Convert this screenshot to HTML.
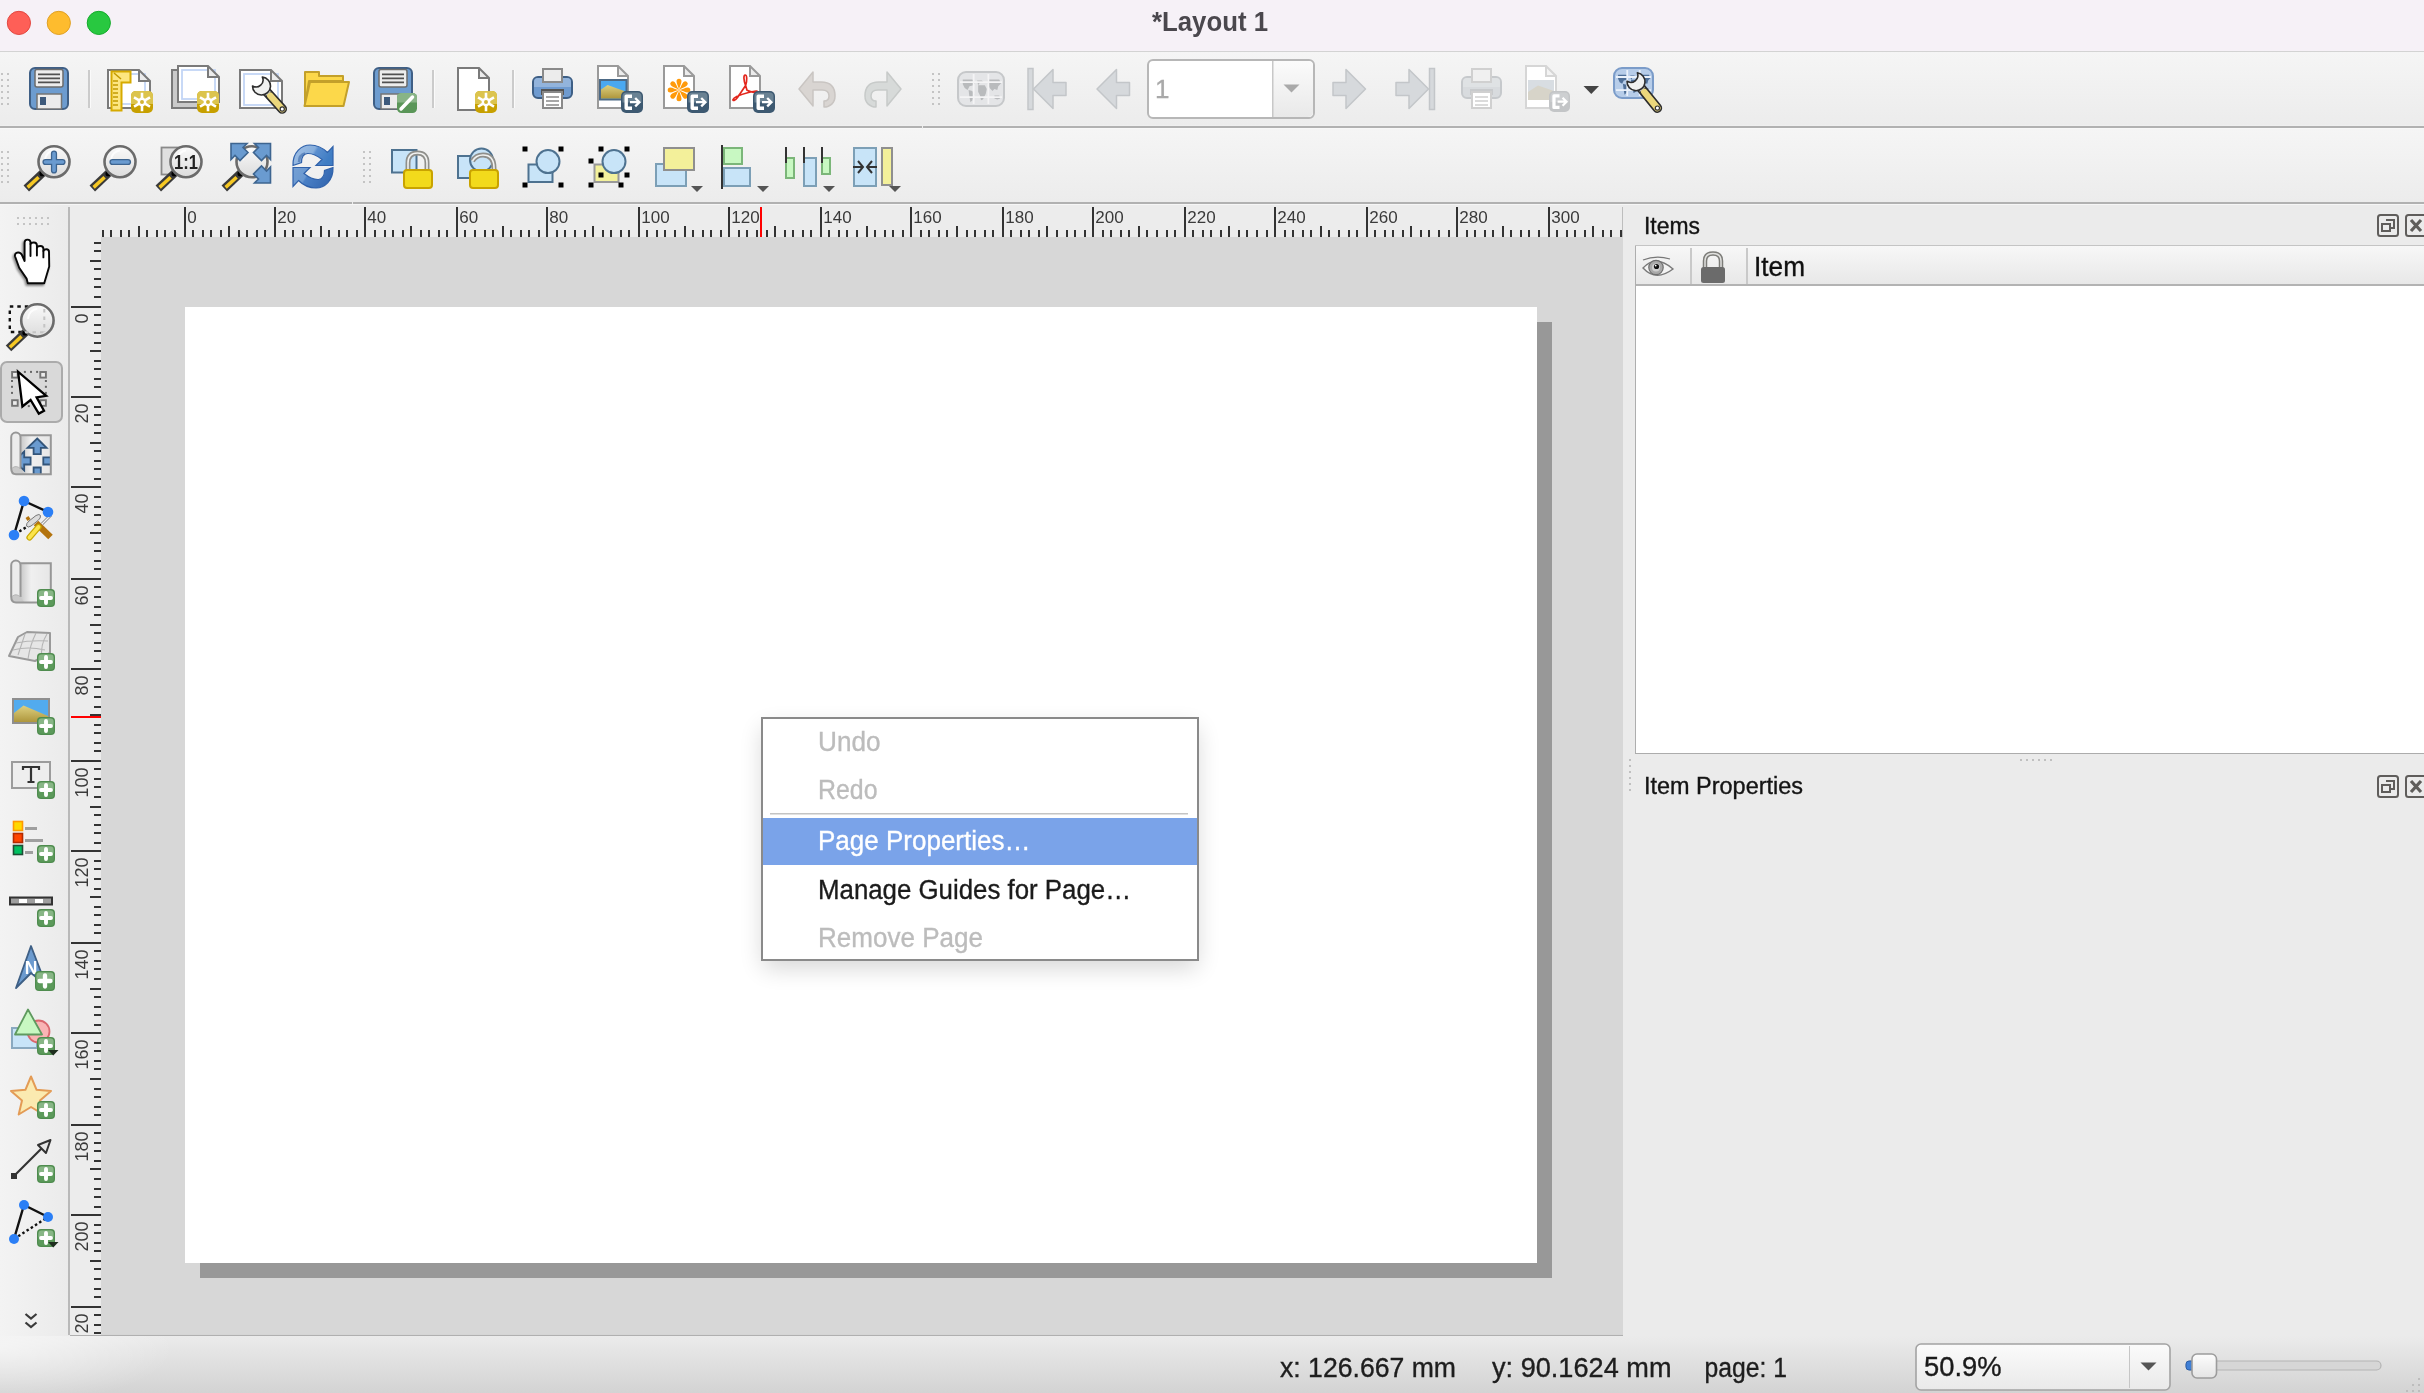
<!DOCTYPE html><html><head><meta charset="utf-8"><style>
html,body{margin:0;padding:0;width:2424px;height:1393px;overflow:hidden;background:#ececec;font-family:"Liberation Sans", sans-serif;}
.t{position:absolute;white-space:nowrap;line-height:1;}
</style></head><body>
<svg width="2424" height="1393" viewBox="0 0 2424 1393" style="position:absolute;left:0;top:0;will-change:transform">
<defs><linearGradient id="tb" x1="0" y1="0" x2="0" y2="1"><stop offset="0" stop-color="#f5f5f5"/><stop offset="1" stop-color="#ececec"/></linearGradient><linearGradient id="sb" x1="0" y1="0" x2="0" y2="1"><stop offset="0" stop-color="#ebebeb"/><stop offset="1" stop-color="#d3d3d3"/></linearGradient><linearGradient id="lt" x1="0" y1="0" x2="1" y2="0"><stop offset="0" stop-color="#f3f3f3"/><stop offset="1" stop-color="#ebebeb"/></linearGradient><linearGradient id="hdr" x1="0" y1="0" x2="0" y2="1"><stop offset="0" stop-color="#f7f7f7"/><stop offset="1" stop-color="#e8e8e8"/></linearGradient><linearGradient id="combo" x1="0" y1="0" x2="0" y2="1"><stop offset="0" stop-color="#fbfbfb"/><stop offset="1" stop-color="#e9e9e9"/></linearGradient><linearGradient id="glass" x1="0" y1="0" x2="0" y2="1"><stop offset="0" stop-color="#fafafa"/><stop offset="1" stop-color="#dcdcdc"/></linearGradient><linearGradient id="sky" x1="0" y1="0" x2="0" y2="1"><stop offset="0" stop-color="#4aa6ee"/><stop offset="0.45" stop-color="#5cb4f0"/><stop offset="0.46" stop-color="#dccf84"/><stop offset="1" stop-color="#ad943a"/></linearGradient><linearGradient id="sand" x1="0" y1="0" x2="0" y2="1"><stop offset="0" stop-color="#ddd080"/><stop offset="1" stop-color="#ae963c"/></linearGradient><linearGradient id="scroll" x1="0" y1="0" x2="1" y2="0"><stop offset="0" stop-color="#c8c8c8"/><stop offset="0.35" stop-color="#f0f0f0"/><stop offset="1" stop-color="#e6e6e6"/></linearGradient><linearGradient id="knob" x1="0" y1="0" x2="0" y2="1"><stop offset="0" stop-color="#fdfdfd"/><stop offset="1" stop-color="#e4e4e4"/></linearGradient><radialGradient id="sbl" cx="0" cy="0.2" r="1" gradientTransform="scale(0.25 1)"><stop offset="0" stop-color="#ffffff" stop-opacity="0.55"/><stop offset="1" stop-color="#ffffff" stop-opacity="0"/></radialGradient><clipPath id="rclip"><rect x="69" y="205" width="1553" height="1129"/></clipPath><linearGradient id="rf1" x1="0" y1="0" x2="1" y2="0.3"><stop offset="0" stop-color="#a3c1e6"/><stop offset="0.55" stop-color="#86aedc"/><stop offset="0.62" stop-color="#5b8fcf"/><stop offset="1" stop-color="#3f7dc4"/></linearGradient><linearGradient id="rf2" x1="0" y1="0" x2="1" y2="0.3"><stop offset="0" stop-color="#75a0d4"/><stop offset="0.4" stop-color="#6a98d0"/><stop offset="0.45" stop-color="#4a80c6"/><stop offset="1" stop-color="#3569b2"/></linearGradient></defs>
<rect x="0" y="0" width="2424" height="51" fill="#f6f1f7" />
<rect x="0" y="51" width="2424" height="1" fill="#d3d3d3" />
<rect x="0" y="52" width="2424" height="74" fill="url(#tb)" />
<rect x="0" y="125" width="2424" height="1" fill="#efefef" />
<rect x="0" y="126" width="2424" height="2" fill="#b1b1b1" />
<rect x="0" y="128" width="2424" height="1" fill="#f8f8f8" />
<rect x="0" y="129" width="2424" height="73" fill="url(#tb)" />
<rect x="0" y="202" width="2424" height="2" fill="#b1b1b1" />
<rect x="352" y="202" width="1" height="3" fill="#ededed" />
<rect x="922" y="126" width="1" height="3" fill="#ededed" />
<rect x="0" y="204" width="2424" height="1" fill="#f6f6f6" />
<rect x="0" y="205" width="2424" height="1131" fill="#ebebeb" />
<rect x="0" y="205" width="68" height="1131" fill="url(#lt)" />
<rect x="69" y="205" width="1554" height="32" fill="#ececec" />
<rect x="69" y="205" width="32" height="1130" fill="#ececec" />
<rect x="68" y="207" width="2" height="1128" fill="#b9b9b9" />
<rect x="101" y="237" width="1522" height="1097" fill="#d7d7d7" />
<rect x="101" y="1334" width="1522" height="1" fill="#d5d5d5" />
<rect x="70" y="1335" width="1553" height="1" fill="#b0b0b0" />
<rect x="1622" y="207" width="1" height="30" fill="#bdbdbd" />
<rect x="200" y="322" width="1352" height="956" fill="#989898" />
<rect x="185" y="307" width="1352" height="956" fill="#ffffff" />
<rect x="0" y="1336" width="2424" height="57" fill="url(#sb)" />
<rect x="0" y="1336" width="700" height="57" fill="url(#sbl)" />
<path d="M103 230V237M111 230V237M121 230V237M129 230V237M139 226V237M147 230V237M157 230V237M165 230V237M175 230V237M185 207V237M193 230V237M203 230V237M211 230V237M221 230V237M229 226V237M239 230V237M247 230V237M257 230V237M265 230V237M275 207V237M285 230V237M293 230V237M303 230V237M311 230V237M321 226V237M329 230V237M339 230V237M347 230V237M357 230V237M365 207V237M375 230V237M385 230V237M393 230V237M403 230V237M411 226V237M421 230V237M429 230V237M439 230V237M447 230V237M457 207V237M465 230V237M475 230V237M485 230V237M493 230V237M503 226V237M511 230V237M521 230V237M529 230V237M539 230V237M547 207V237M557 230V237M565 230V237M575 230V237M585 230V237M593 226V237M603 230V237M611 230V237M621 230V237M629 230V237M639 207V237M647 230V237M657 230V237M665 230V237M675 230V237M685 226V237M693 230V237M703 230V237M711 230V237M721 230V237M729 207V237M739 230V237M747 230V237M757 230V237M767 230V237M775 226V237M785 230V237M793 230V237M803 230V237M811 230V237M821 207V237M829 230V237M839 230V237M847 230V237M857 230V237M867 226V237M875 230V237M885 230V237M893 230V237M903 230V237M911 207V237M921 230V237M929 230V237M939 230V237M947 230V237M957 226V237M967 230V237M975 230V237M985 230V237M993 230V237M1003 207V237M1011 230V237M1021 230V237M1029 230V237M1039 230V237M1047 226V237M1057 230V237M1067 230V237M1075 230V237M1085 230V237M1093 207V237M1103 230V237M1111 230V237M1121 230V237M1129 230V237M1139 226V237M1147 230V237M1157 230V237M1167 230V237M1175 230V237M1185 207V237M1193 230V237M1203 230V237M1211 230V237M1221 230V237M1229 226V237M1239 230V237M1247 230V237M1257 230V237M1267 230V237M1275 207V237M1285 230V237M1293 230V237M1303 230V237M1311 230V237M1321 226V237M1329 230V237M1339 230V237M1349 230V237M1357 230V237M1367 207V237M1375 230V237M1385 230V237M1393 230V237M1403 230V237M1411 226V237M1421 230V237M1429 230V237M1439 230V237M1449 230V237M1457 207V237M1467 230V237M1475 230V237M1485 230V237M1493 230V237M1503 226V237M1511 230V237M1521 230V237M1529 230V237M1539 230V237M1549 207V237M1557 230V237M1567 230V237M1575 230V237M1585 230V237M1593 226V237M1603 230V237M1611 230V237M1621 230V237M94 243H101M94 251H101M90 261H101M94 269H101M94 279H101M94 287H101M94 297H101M71 307H101M94 315H101M94 325H101M94 333H101M94 343H101M90 351H101M94 361H101M94 369H101M94 379H101M94 387H101M71 397H101M94 407H101M94 415H101M94 425H101M94 433H101M90 443H101M94 451H101M94 461H101M94 469H101M94 479H101M71 487H101M94 497H101M94 507H101M94 515H101M94 525H101M90 533H101M94 543H101M94 551H101M94 561H101M94 569H101M71 579H101M94 587H101M94 597H101M94 607H101M94 615H101M90 625H101M94 633H101M94 643H101M94 651H101M94 661H101M71 669H101M94 679H101M94 687H101M94 697H101M94 707H101M90 715H101M94 725H101M94 733H101M94 743H101M94 751H101M71 761H101M94 769H101M94 779H101M94 787H101M94 797H101M90 807H101M94 815H101M94 825H101M94 833H101M94 843H101M71 851H101M94 861H101M94 869H101M94 879H101M94 889H101M90 897H101M94 907H101M94 915H101M94 925H101M94 933H101M71 943H101M94 951H101M94 961H101M94 969H101M94 979H101M90 989H101M94 997H101M94 1007H101M94 1015H101M94 1025H101M71 1033H101M94 1043H101M94 1051H101M94 1061H101M94 1069H101M90 1079H101M94 1089H101M94 1097H101M94 1107H101M94 1115H101M71 1125H101M94 1133H101M94 1143H101M94 1151H101M94 1161H101M90 1169H101M94 1179H101M94 1189H101M94 1197H101M94 1207H101M71 1215H101M94 1225H101M94 1233H101M94 1243H101M94 1251H101M90 1261H101M94 1269H101M94 1279H101M94 1289H101M94 1297H101M71 1307H101M94 1315H101M94 1325H101M94 1333H101" stroke="#333333" stroke-width="2" fill="none"/>
<g fill="#3a3a3a" font-family='"Liberation Sans", sans-serif' clip-path="url(#rclip)"><text x="187.3" y="223" font-size="17">0</text><text x="277.3" y="223" font-size="17">20</text><text x="367.3" y="223" font-size="17">40</text><text x="459.3" y="223" font-size="17">60</text><text x="549.3" y="223" font-size="17">80</text><text x="641.3" y="223" font-size="17">100</text><text x="731.3" y="223" font-size="17">120</text><text x="823.3" y="223" font-size="17">140</text><text x="913.3" y="223" font-size="17">160</text><text x="1005.3" y="223" font-size="17">180</text><text x="1095.3" y="223" font-size="17">200</text><text x="1187.3" y="223" font-size="17">220</text><text x="1277.3" y="223" font-size="17">240</text><text x="1369.3" y="223" font-size="17">260</text><text x="1459.3" y="223" font-size="17">280</text><text x="1551.3" y="223" font-size="17">300</text><text transform="translate(87.5 313.5) rotate(-90)" text-anchor="end" font-size="18">0</text><text transform="translate(87.5 403.5) rotate(-90)" text-anchor="end" font-size="18">20</text><text transform="translate(87.5 493.5) rotate(-90)" text-anchor="end" font-size="18">40</text><text transform="translate(87.5 585.5) rotate(-90)" text-anchor="end" font-size="18">60</text><text transform="translate(87.5 675.5) rotate(-90)" text-anchor="end" font-size="18">80</text><text transform="translate(87.5 767.5) rotate(-90)" text-anchor="end" font-size="18">100</text><text transform="translate(87.5 857.5) rotate(-90)" text-anchor="end" font-size="18">120</text><text transform="translate(87.5 949.5) rotate(-90)" text-anchor="end" font-size="18">140</text><text transform="translate(87.5 1039.5) rotate(-90)" text-anchor="end" font-size="18">160</text><text transform="translate(87.5 1131.5) rotate(-90)" text-anchor="end" font-size="18">180</text><text transform="translate(87.5 1221.5) rotate(-90)" text-anchor="end" font-size="18">200</text><text transform="translate(87.5 1313.5) rotate(-90)" text-anchor="end" font-size="18">220</text></g>
<rect x="760" y="207" width="2" height="30" fill="#ff0000" />
<rect x="71" y="716" width="30" height="2" fill="#ff0000" />
<rect x="1" y="73" width="2" height="2" fill="#c4c4c4" />
<rect x="7" y="73" width="2" height="2" fill="#c4c4c4" />
<rect x="1" y="79" width="2" height="2" fill="#c4c4c4" />
<rect x="7" y="79" width="2" height="2" fill="#c4c4c4" />
<rect x="1" y="85" width="2" height="2" fill="#c4c4c4" />
<rect x="7" y="85" width="2" height="2" fill="#c4c4c4" />
<rect x="1" y="91" width="2" height="2" fill="#c4c4c4" />
<rect x="7" y="91" width="2" height="2" fill="#c4c4c4" />
<rect x="1" y="97" width="2" height="2" fill="#c4c4c4" />
<rect x="7" y="97" width="2" height="2" fill="#c4c4c4" />
<rect x="1" y="103" width="2" height="2" fill="#c4c4c4" />
<rect x="7" y="103" width="2" height="2" fill="#c4c4c4" />
<rect x="932" y="73" width="2" height="2" fill="#c4c4c4" />
<rect x="938" y="73" width="2" height="2" fill="#c4c4c4" />
<rect x="932" y="79" width="2" height="2" fill="#c4c4c4" />
<rect x="938" y="79" width="2" height="2" fill="#c4c4c4" />
<rect x="932" y="85" width="2" height="2" fill="#c4c4c4" />
<rect x="938" y="85" width="2" height="2" fill="#c4c4c4" />
<rect x="932" y="91" width="2" height="2" fill="#c4c4c4" />
<rect x="938" y="91" width="2" height="2" fill="#c4c4c4" />
<rect x="932" y="97" width="2" height="2" fill="#c4c4c4" />
<rect x="938" y="97" width="2" height="2" fill="#c4c4c4" />
<rect x="932" y="103" width="2" height="2" fill="#c4c4c4" />
<rect x="938" y="103" width="2" height="2" fill="#c4c4c4" />
<rect x="1" y="151" width="2" height="2" fill="#c4c4c4" />
<rect x="7" y="151" width="2" height="2" fill="#c4c4c4" />
<rect x="1" y="157" width="2" height="2" fill="#c4c4c4" />
<rect x="7" y="157" width="2" height="2" fill="#c4c4c4" />
<rect x="1" y="163" width="2" height="2" fill="#c4c4c4" />
<rect x="7" y="163" width="2" height="2" fill="#c4c4c4" />
<rect x="1" y="169" width="2" height="2" fill="#c4c4c4" />
<rect x="7" y="169" width="2" height="2" fill="#c4c4c4" />
<rect x="1" y="175" width="2" height="2" fill="#c4c4c4" />
<rect x="7" y="175" width="2" height="2" fill="#c4c4c4" />
<rect x="1" y="181" width="2" height="2" fill="#c4c4c4" />
<rect x="7" y="181" width="2" height="2" fill="#c4c4c4" />
<rect x="363" y="151" width="2" height="2" fill="#c4c4c4" />
<rect x="369" y="151" width="2" height="2" fill="#c4c4c4" />
<rect x="363" y="157" width="2" height="2" fill="#c4c4c4" />
<rect x="369" y="157" width="2" height="2" fill="#c4c4c4" />
<rect x="363" y="163" width="2" height="2" fill="#c4c4c4" />
<rect x="369" y="163" width="2" height="2" fill="#c4c4c4" />
<rect x="363" y="169" width="2" height="2" fill="#c4c4c4" />
<rect x="369" y="169" width="2" height="2" fill="#c4c4c4" />
<rect x="363" y="175" width="2" height="2" fill="#c4c4c4" />
<rect x="369" y="175" width="2" height="2" fill="#c4c4c4" />
<rect x="363" y="181" width="2" height="2" fill="#c4c4c4" />
<rect x="369" y="181" width="2" height="2" fill="#c4c4c4" />
<rect x="17" y="217" width="2" height="2" fill="#c4c4c4" />
<rect x="17" y="223" width="2" height="2" fill="#c4c4c4" />
<rect x="23" y="217" width="2" height="2" fill="#c4c4c4" />
<rect x="23" y="223" width="2" height="2" fill="#c4c4c4" />
<rect x="29" y="217" width="2" height="2" fill="#c4c4c4" />
<rect x="29" y="223" width="2" height="2" fill="#c4c4c4" />
<rect x="35" y="217" width="2" height="2" fill="#c4c4c4" />
<rect x="35" y="223" width="2" height="2" fill="#c4c4c4" />
<rect x="41" y="217" width="2" height="2" fill="#c4c4c4" />
<rect x="41" y="223" width="2" height="2" fill="#c4c4c4" />
<rect x="47" y="217" width="2" height="2" fill="#c4c4c4" />
<rect x="47" y="223" width="2" height="2" fill="#c4c4c4" />
<rect x="88" y="70" width="2" height="38" fill="#cbcbcb" />
<rect x="90" y="70" width="1" height="38" fill="#fafafa" />
<rect x="432" y="70" width="2" height="38" fill="#cbcbcb" />
<rect x="434" y="70" width="1" height="38" fill="#fafafa" />
<rect x="512" y="70" width="2" height="38" fill="#cbcbcb" />
<rect x="514" y="70" width="1" height="38" fill="#fafafa" />
<circle cx="18.9" cy="22.9" r="11.6" fill="#fe5f57" stroke="#e2463f" stroke-width="1"/>
<circle cx="58.8" cy="22.9" r="11.6" fill="#febc2e" stroke="#e0a023" stroke-width="1"/>
<circle cx="98.8" cy="22.9" r="11.6" fill="#28c840" stroke="#14ab2b" stroke-width="1"/>
<text x="1152" y="31" font-family='"Liberation Sans", sans-serif' font-size="27" font-weight="bold" fill="#4a474d" text-anchor="start" textLength="116" lengthAdjust="spacingAndGlyphs" >*Layout 1</text>
<text x="1644" y="234" font-family='"Liberation Sans", sans-serif' font-size="23" font-weight="normal" fill="#141414" text-anchor="start" textLength="56" lengthAdjust="spacingAndGlyphs"  stroke="#141414" stroke-width="0.35">Items</text>
<rect x="2378" y="215" width="20" height="21" rx="2.5" fill="none" stroke="#5f5d5b" stroke-width="2"/>
<path d="M2386 220h8v8h-3M2382 224h8v7h-8z" fill="none" stroke="#5f5d5b" stroke-width="2"/>
<rect x="2406" y="215" width="20" height="21" rx="2.5" fill="none" stroke="#5f5d5b" stroke-width="2"/>
<path d="M2411 220l10 11M2421 220l-10 11" fill="none" stroke="#5f5d5b" stroke-width="3.2"/>
<rect x="2378" y="776" width="20" height="21" rx="2.5" fill="none" stroke="#5f5d5b" stroke-width="2"/>
<path d="M2386 781h8v8h-3M2382 785h8v7h-8z" fill="none" stroke="#5f5d5b" stroke-width="2"/>
<rect x="2406" y="776" width="20" height="21" rx="2.5" fill="none" stroke="#5f5d5b" stroke-width="2"/>
<path d="M2411 781l10 11M2421 781l-10 11" fill="none" stroke="#5f5d5b" stroke-width="3.2"/>
<rect x="1635" y="245" width="789" height="509" fill="#ffffff" />
<rect x="1635" y="245" width="1" height="509" fill="#aeaeae" />
<rect x="1635" y="245" width="789" height="1" fill="#c4c4c4" />
<rect x="1635" y="753" width="789" height="1" fill="#acacac" />
<rect x="1636" y="246" width="788" height="38" fill="url(#hdr)" />
<rect x="1636" y="284" width="788" height="2" fill="#b3b3b3" />
<rect x="1690" y="248" width="2" height="36" fill="#c9c9c9" />
<rect x="1746" y="248" width="2" height="36" fill="#c9c9c9" />
<text x="1754" y="276" font-family='"Liberation Sans", sans-serif' font-size="27" font-weight="normal" fill="#0f0f0f" text-anchor="start" textLength="51" lengthAdjust="spacingAndGlyphs"  stroke="#0f0f0f" stroke-width="0.35">Item</text>
<g transform="translate(1642 256)"><path d="M1 4 Q14 -1 28 3" fill="none" stroke="#777" stroke-width="1.3"/><path d="M1 12 Q14 -2 31 13 Q14 26 1 12z" fill="#f4f4f4" stroke="#7a7a7a" stroke-width="1.4"/><circle cx="14" cy="11.5" r="7.2" fill="#a9a9a9" stroke="#6f6f6f" stroke-width="1.2"/><circle cx="14" cy="11.5" r="4" fill="#cfcfcf"/><circle cx="14.5" cy="10.5" r="2.6" fill="#111"/><circle cx="13.7" cy="9.6" r="0.9" fill="#fff"/></g>
<path d="M1705 269 V261 Q1705 253.5 1713 253.5 Q1721 253.5 1721 261 V269" fill="none" stroke="#7c7c78" stroke-width="4.5"/>
<path d="M1705 269 V261 Q1705 253.5 1713 253.5 Q1721 253.5 1721 261 V269" fill="none" stroke="#e0e0de" stroke-width="1.5"/>
<rect x="1701" y="267" width="24" height="16" rx="2.5" fill="#6b6b6b"/>
<rect x="2020" y="759" width="2" height="2" fill="#c0c0c0" />
<rect x="1629" y="759" width="2" height="2" fill="#c0c0c0" />
<rect x="2026" y="759" width="2" height="2" fill="#c0c0c0" />
<rect x="1629" y="765" width="2" height="2" fill="#c0c0c0" />
<rect x="2032" y="759" width="2" height="2" fill="#c0c0c0" />
<rect x="1629" y="771" width="2" height="2" fill="#c0c0c0" />
<rect x="2038" y="759" width="2" height="2" fill="#c0c0c0" />
<rect x="1629" y="777" width="2" height="2" fill="#c0c0c0" />
<rect x="2044" y="759" width="2" height="2" fill="#c0c0c0" />
<rect x="1629" y="783" width="2" height="2" fill="#c0c0c0" />
<rect x="2050" y="759" width="2" height="2" fill="#c0c0c0" />
<rect x="1629" y="789" width="2" height="2" fill="#c0c0c0" />
<text x="1644" y="794" font-family='"Liberation Sans", sans-serif' font-size="23" font-weight="normal" fill="#141414" text-anchor="start" textLength="159" lengthAdjust="spacingAndGlyphs"  stroke="#141414" stroke-width="0.35">Item Properties</text>
<text x="1280" y="1377" font-family='"Liberation Sans", sans-serif' font-size="27" font-weight="normal" fill="#1e1e1e" text-anchor="start" textLength="176" lengthAdjust="spacingAndGlyphs"  stroke="#1e1e1e" stroke-width="0.35">x: 126.667 mm</text>
<text x="1492" y="1377" font-family='"Liberation Sans", sans-serif' font-size="27" font-weight="normal" fill="#1e1e1e" text-anchor="start" textLength="179.5" lengthAdjust="spacingAndGlyphs"  stroke="#1e1e1e" stroke-width="0.35">y: 90.1624 mm</text>
<text x="1704.5" y="1377" font-family='"Liberation Sans", sans-serif' font-size="27" font-weight="normal" fill="#1e1e1e" text-anchor="start" textLength="82.5" lengthAdjust="spacingAndGlyphs"  stroke="#1e1e1e" stroke-width="0.35">page: 1</text>
<rect x="1916" y="1344" width="254" height="46" rx="5" fill="url(#combo)" stroke="#a3a3a3" stroke-width="1.6"/>
<rect x="2129" y="1346" width="1" height="42" fill="#c6c6c6" />
<path d="M2140.5 1362.5h16l-8 8z" fill="#555"/>
<text x="1924" y="1376" font-family='"Liberation Sans", sans-serif' font-size="27" font-weight="normal" fill="#1a1a1a" text-anchor="start" textLength="77.5" lengthAdjust="spacingAndGlyphs"  stroke="#1a1a1a" stroke-width="0.35">50.9%</text>
<rect x="2186" y="1361" width="195" height="9" rx="4.5" fill="#d6d6d6" stroke="#b3b3b3" stroke-width="1.2"/>
<rect x="2186" y="1361" width="10" height="9" rx="3" fill="#3f7fd6" stroke="#2d5ea6" stroke-width="1"/>
<rect x="2192" y="1354" width="24.5" height="24" rx="5" fill="url(#knob)" stroke="#9c9c9c" stroke-width="1.6"/>
<rect x="2418" y="1378" width="2" height="2" fill="#bdbdbd" />
<rect x="2418" y="1384" width="2" height="2" fill="#bdbdbd" />
<rect x="2412" y="1384" width="2" height="2" fill="#bdbdbd" />
<rect x="2418" y="1390" width="2" height="2" fill="#bdbdbd" />
<rect x="2412" y="1390" width="2" height="2" fill="#bdbdbd" />
<rect x="2406" y="1390" width="2" height="2" fill="#bdbdbd" />
<rect x="1148" y="60" width="166" height="58" rx="5" fill="#ffffff" stroke="#b7b7b7" stroke-width="2"/>
<path d="M1273 61h34q6 0 6 5v46q0 5-6 5h-34z" fill="url(#combo)"/>
<rect x="1272" y="61" width="1.5" height="56" fill="#c8c8c8" />
<path d="M1283.5 84.5h16l-8 8z" fill="#a9a9a9"/>
<text x="1155" y="98" font-family='"Liberation Sans", sans-serif' font-size="26" font-weight="normal" fill="#a9a9a9" text-anchor="start"  stroke="#a9a9a9" stroke-width="0.35">1</text>
<rect x="1" y="362" width="61" height="60" rx="6" fill="#d9d9d9" stroke="#ababab" stroke-width="2"/>
<defs><filter id="msh" x="-20%" y="-20%" width="140%" height="150%"><feGaussianBlur stdDeviation="12"/></filter></defs>
<rect x="763" y="728" width="434" height="240" fill="#000" opacity="0.16" filter="url(#msh)"/>
<rect x="761" y="717" width="438" height="244" fill="#8a8a8a" />
<rect x="763" y="719" width="434" height="240" fill="#ffffff" />
<rect x="770" y="813" width="418" height="1.5" fill="#c4c4c4" />
<rect x="763" y="818" width="434" height="47" fill="#7aa3e9" />
<text x="818" y="751" font-family='"Liberation Sans", sans-serif' font-size="27" font-weight="normal" fill="#bcbcbc" text-anchor="start" textLength="62.5" lengthAdjust="spacingAndGlyphs"  stroke="#bcbcbc" stroke-width="0.35">Undo</text>
<text x="818" y="799" font-family='"Liberation Sans", sans-serif' font-size="27" font-weight="normal" fill="#bcbcbc" text-anchor="start" textLength="59.5" lengthAdjust="spacingAndGlyphs"  stroke="#bcbcbc" stroke-width="0.35">Redo</text>
<text x="818" y="850" font-family='"Liberation Sans", sans-serif' font-size="27" font-weight="normal" fill="#ffffff" text-anchor="start" textLength="212.5" lengthAdjust="spacingAndGlyphs"  stroke="#ffffff" stroke-width="0.35">Page Properties…</text>
<text x="818" y="899" font-family='"Liberation Sans", sans-serif' font-size="27" font-weight="normal" fill="#1b1b1b" text-anchor="start" textLength="313" lengthAdjust="spacingAndGlyphs"  stroke="#1b1b1b" stroke-width="0.35">Manage Guides for Page…</text>
<text x="818" y="947" font-family='"Liberation Sans", sans-serif' font-size="27" font-weight="normal" fill="#bcbcbc" text-anchor="start" textLength="165" lengthAdjust="spacingAndGlyphs"  stroke="#bcbcbc" stroke-width="0.35">Remove Page</text>
<rect x="30" y="68" width="38" height="41" rx="5" fill="#6d9ccf" stroke="#3f5f85" stroke-width="2"/><rect x="35" y="69.5" width="28" height="17.5" rx="2" fill="#ededed" stroke="#6c6c6c" stroke-width="1.5"/><path d="M38 74.3h22M38 78.3h22M38 82.3h22" stroke="#505050" stroke-width="1.8"/><rect x="37" y="94" width="24.5" height="15" fill="#ececec" stroke="#747474" stroke-width="1.5"/><rect x="40" y="97" width="6" height="8" fill="#3e5a7c"/>
<path d="M108 70H139L150 81V108H108Z" fill="#ffffff"/><rect x="113" y="74" width="32" height="30" fill="none" stroke="#c3d5f6" stroke-width="1.8"/><path d="M139 70L150 81H139Z" fill="#ececec"/><path d="M108 70H139L150 81V108H108Z" fill="none" stroke="#7a7a7a" stroke-width="2" stroke-linejoin="miter"/><path d="M139 70V81H150" fill="none" stroke="#7a7a7a" stroke-width="2"/>
<path d="M111.5 71.5h19v11h-9v28h-10z" fill="#fde680" stroke="#d6aa00" stroke-width="2"/>
<path d="M113 81h5M113 85h5M113 89h5M113 93h5M113 97h5M113 101h5M113 105h5M114 73l7 6" stroke="#c29a00" stroke-width="1.6"/>
<rect x="131" y="91" width="22" height="22" rx="5" fill="#c7a000"/><path d="M131 96q0-5 5-5h12q5 0 5 5v8.0h-22z" fill="#dcc44e"/><path d="M142.00 92.76L142.00 111.24M134.00 97.38L150.00 106.62M134.00 106.62L150.00 97.38" stroke="#ffffff" stroke-width="2.6"/><circle cx="142.0" cy="102.0" r="4.40" fill="#ffffff"/><circle cx="142.0" cy="102.0" r="1.98" fill="#d2b436"/>
<rect x="172" y="70" width="40" height="38" fill="#cacaca" stroke="#7a7a7a" stroke-width="2"/>
<path d="M178 66H208L219 77V102H178Z" fill="#ffffff"/><rect x="182" y="70" width="33" height="29" fill="none" stroke="#c3d5f6" stroke-width="1.8"/><path d="M208 66L219 77H208Z" fill="#ececec"/><path d="M178 66H208L219 77V102H178Z" fill="none" stroke="#7a7a7a" stroke-width="2" stroke-linejoin="miter"/><path d="M208 66V77H219" fill="none" stroke="#7a7a7a" stroke-width="2"/>
<rect x="197" y="91" width="22" height="22" rx="5" fill="#c7a000"/><path d="M197 96q0-5 5-5h12q5 0 5 5v8.0h-22z" fill="#dcc44e"/><path d="M208.00 92.76L208.00 111.24M200.00 97.38L216.00 106.62M200.00 106.62L216.00 97.38" stroke="#ffffff" stroke-width="2.6"/><circle cx="208.0" cy="102.0" r="4.40" fill="#ffffff"/><circle cx="208.0" cy="102.0" r="1.98" fill="#d2b436"/>
<path d="M240 70H271L282 81V108H240Z" fill="#ffffff"/><rect x="244" y="74" width="34" height="31" fill="none" stroke="#c3d5f6" stroke-width="1.8"/><path d="M271 70L282 81H271Z" fill="#ececec"/><path d="M240 70H271L282 81V108H240Z" fill="none" stroke="#7a7a7a" stroke-width="2" stroke-linejoin="miter"/><path d="M271 70V81H282" fill="none" stroke="#7a7a7a" stroke-width="2"/>
<path d="M265.51 90.46L282.24 109.04" stroke="#2d2d2d" stroke-width="9.6" stroke-linecap="round"/><path d="M270.20 95.66L282.24 109.04" stroke="#ebd77c" stroke-width="6.4" stroke-linecap="round"/><path d="M266.18 91.20L268.33 93.58" stroke="#d9dbd9" stroke-width="6.4"/><circle cx="282.24" cy="109.04" r="2.1" fill="#ffffff" stroke="#333" stroke-width="1.2"/><path d="M262.40 77.05A9.0 9.0 0 1 1 252.50 85.96A7.0 7.0 0 0 0 262.40 77.05Z" fill="#f0f1f0" stroke="#2d2d2d" stroke-width="1.6" stroke-linejoin="round"/>
<path d="M305 105V72h14v4h24v5H309z" fill="#fcd84a" stroke="#c3a02a" stroke-width="2" stroke-linejoin="round"/>
<path d="M304.5 106L310 82H349L343.5 106Z" fill="#fcd84a" stroke="#c3a02a" stroke-width="2" stroke-linejoin="round"/>
<rect x="374" y="68" width="38" height="41" rx="5" fill="#6d9ccf" stroke="#3f5f85" stroke-width="2"/><rect x="379" y="69.5" width="28" height="17.5" rx="2" fill="#ededed" stroke="#6c6c6c" stroke-width="1.5"/><path d="M382 74.3h22M382 78.3h22M382 82.3h22" stroke="#505050" stroke-width="1.8"/><rect x="381" y="94" width="24.5" height="15" fill="#ececec" stroke="#747474" stroke-width="1.5"/><rect x="384" y="97" width="6" height="8" fill="#3e5a7c"/>
<rect x="397" y="93" width="20" height="20" rx="4.5" fill="#5a9658"/>
<path d="M397 97.5q0-4.5 4.5-4.5h11q4.5 0 4.5 4.5v5h-20z" fill="#88b486"/>
<path d="M401 109l11.5-12" stroke="#ffffff" stroke-width="3.5" stroke-linecap="round"/>
<path d="M458 68H479L489 78V110H458Z" fill="#ffffff"/><path d="M479 68L489 78H479Z" fill="#ececec"/><path d="M458 68H479L489 78V110H458Z" fill="none" stroke="#7a7a7a" stroke-width="2" stroke-linejoin="miter"/><path d="M479 68V78H489" fill="none" stroke="#7a7a7a" stroke-width="2"/>
<rect x="475" y="91" width="22" height="22" rx="5" fill="#c7a000"/><path d="M475 96q0-5 5-5h12q5 0 5 5v8.0h-22z" fill="#dcc44e"/><path d="M486.00 92.76L486.00 111.24M478.00 97.38L494.00 106.62M478.00 106.62L494.00 97.38" stroke="#ffffff" stroke-width="2.6"/><circle cx="486.0" cy="102.0" r="4.40" fill="#ffffff"/><circle cx="486.0" cy="102.0" r="1.98" fill="#d2b436"/>
<rect x="533" y="77" width="39" height="21" rx="5" fill="#6f9bd0" stroke="#3e5f85" stroke-width="2"/><path d="M534 82q0-4 4-4h29q4 0 4 4v5h-37z" fill="#93b4dc"/><rect x="543" y="69" width="19" height="13" fill="#ececec" stroke="#8a8a8a" stroke-width="2"/><rect x="541" y="89" width="23" height="6" fill="#555"/><rect x="543" y="92" width="19" height="16" fill="#ffffff" stroke="#8a8a8a" stroke-width="2"/><path d="M546 97h13M546 101h13M546 105h13" stroke="#8a8a8a" stroke-width="1.6"/>
<path d="M598 66H618L628 76V108H598Z" fill="#ffffff"/><path d="M618 66L628 76H618Z" fill="#ececec"/><path d="M598 66H618L628 76V108H598Z" fill="none" stroke="#9a9a9a" stroke-width="2" stroke-linejoin="miter"/><path d="M618 66V76H628" fill="none" stroke="#9a9a9a" stroke-width="2"/>
<rect x="599" y="79" width="28.5" height="21.5" fill="#4d6a86"/>
<rect x="601" y="81" width="24.5" height="17.5" fill="#4aa8f0"/>
<path d="M601 89.5L607.6 85L625.5 91.5V98.5H601Z" fill="url(#sand)"/>
<rect x="621" y="91" width="22" height="22" rx="5" fill="#3d5971"/><path d="M622.5 96.5q0-4 4-4h11q4 0 4 4v6.0h-19z" fill="#6a8293"/><g transform="translate(621 91) scale(1.0)"><path d="M11 5.2H5.2V17.2H11" fill="none" stroke="#ffffff" stroke-width="3.4" stroke-linejoin="round"/><path d="M9 11.2H18M14.2 7L18.4 11.2L14.2 15.4" stroke="#ffffff" stroke-width="2.3" fill="none"/></g>
<path d="M664 66H684L694 76V108H664Z" fill="#ffffff"/><path d="M684 66L694 76H684Z" fill="#ececec"/><path d="M664 66H684L694 76V108H664Z" fill="none" stroke="#9a9a9a" stroke-width="2" stroke-linejoin="miter"/><path d="M684 66V76H694" fill="none" stroke="#9a9a9a" stroke-width="2"/>
<g transform="translate(679 90)"><g fill="#ff9a0a"><path d="M0 0C-0.3 -3 -2.5 -6.2 -2.5 -8.8A2.5 2.5 0 1 1 2.5 -8.8C2.5 -6.2 0.3 -3 0 0Z" transform="rotate(0)"/><path d="M0 0C-0.3 -3 -2.5 -6.2 -2.5 -8.8A2.5 2.5 0 1 1 2.5 -8.8C2.5 -6.2 0.3 -3 0 0Z" transform="rotate(45)"/><path d="M0 0C-0.3 -3 -2.5 -6.2 -2.5 -8.8A2.5 2.5 0 1 1 2.5 -8.8C2.5 -6.2 0.3 -3 0 0Z" transform="rotate(90)"/><path d="M0 0C-0.3 -3 -2.5 -6.2 -2.5 -8.8A2.5 2.5 0 1 1 2.5 -8.8C2.5 -6.2 0.3 -3 0 0Z" transform="rotate(135)"/><path d="M0 0C-0.3 -3 -2.5 -6.2 -2.5 -8.8A2.5 2.5 0 1 1 2.5 -8.8C2.5 -6.2 0.3 -3 0 0Z" transform="rotate(180)"/><path d="M0 0C-0.3 -3 -2.5 -6.2 -2.5 -8.8A2.5 2.5 0 1 1 2.5 -8.8C2.5 -6.2 0.3 -3 0 0Z" transform="rotate(225)"/><path d="M0 0C-0.3 -3 -2.5 -6.2 -2.5 -8.8A2.5 2.5 0 1 1 2.5 -8.8C2.5 -6.2 0.3 -3 0 0Z" transform="rotate(270)"/><path d="M0 0C-0.3 -3 -2.5 -6.2 -2.5 -8.8A2.5 2.5 0 1 1 2.5 -8.8C2.5 -6.2 0.3 -3 0 0Z" transform="rotate(315)"/></g></g>
<rect x="687" y="91" width="22" height="22" rx="5" fill="#3d5971"/><path d="M688.5 96.5q0-4 4-4h11q4 0 4 4v6.0h-19z" fill="#6a8293"/><g transform="translate(687 91) scale(1.0)"><path d="M11 5.2H5.2V17.2H11" fill="none" stroke="#ffffff" stroke-width="3.4" stroke-linejoin="round"/><path d="M9 11.2H18M14.2 7L18.4 11.2L14.2 15.4" stroke="#ffffff" stroke-width="2.3" fill="none"/></g>
<path d="M730 66H750L760 76V108H730Z" fill="#ffffff"/><path d="M750 66L760 76H750Z" fill="#ececec"/><path d="M730 66H750L760 76V108H730Z" fill="none" stroke="#9a9a9a" stroke-width="2" stroke-linejoin="miter"/><path d="M750 66V76H760" fill="none" stroke="#9a9a9a" stroke-width="2"/>
<path d="M745.6 85.5C743.5 80 743.4 75 745.2 75C747 75 747.3 80 745.6 85.5L737.5 97.5C735 101 732.5 101 733 99.5C733.5 98 737 95.5 748.5 92.5C752.5 91.5 757.5 90.5 757.5 91.7C757.5 93 752 92.5 747 90.2Z" fill="none" stroke="#e3261c" stroke-width="1.7" stroke-linejoin="round"/>
<rect x="753" y="91" width="22" height="22" rx="5" fill="#3d5971"/><path d="M754.5 96.5q0-4 4-4h11q4 0 4 4v6.0h-19z" fill="#6a8293"/><g transform="translate(753 91) scale(1.0)"><path d="M11 5.2H5.2V17.2H11" fill="none" stroke="#ffffff" stroke-width="3.4" stroke-linejoin="round"/><path d="M9 11.2H18M14.2 7L18.4 11.2L14.2 15.4" stroke="#ffffff" stroke-width="2.3" fill="none"/></g>
<path d="M799 89L813 72V82H821C831 82 835 88 835 96C835 103 830 107 824 107V101C827 101 829 99 829 96C829 92 826 90 822 90H813V106Z" fill="#d9d5d2" stroke="#c9c5c2" stroke-width="1.5" stroke-linejoin="round"/>
<path d="M901 89L887 72V82H879C869 82 865 88 865 96C865 103 870 107 876 107V101C873 101 871 99 871 96C871 92 874 90 878 90H887V106Z" fill="#d7dad9" stroke="#c7cac9" stroke-width="1.5" stroke-linejoin="round"/>
<rect x="958" y="72" width="46" height="34" rx="8" fill="#e4e5e7" stroke="#c6c8ca" stroke-width="2"/><g fill="#b9bbbd" transform="translate(958 72) scale(0.9583333333333334 0.9444444444444444)"><path d="M5 8h10l3 3-2 3-4 1-2 4-3-2-2-4z"/><path d="M11 19l4 1 2 4-2 6-2 2-1-5z"/><path d="M20 9h5l2 2h-4l-2 3z"/><path d="M21 14h7l2 4-1 5-3 6-2 1-1-5-2-4z"/><path d="M31 8h12l2 4-3 3-1 4-3-1-2 2-3-3-2-5z"/><path d="M38 25h5l1 3-3 1-3-1z"/></g><path d="M973.64 74V104M988.36 74V104M960 82.2H1002M960 97.16H1002" stroke="#f4f4f5" stroke-width="1.8"/>
<rect x="1028" y="68.5" width="5" height="41" fill="#d6d9dc" stroke="#c3c6c9" stroke-width="1.5"/>
<path d="M1033.5 89L1053 69.5V82.5H1066V95.5H1053V108.5Z" fill="#d6d9dc" stroke="#c3c6c9" stroke-width="1.5" stroke-linejoin="round"/>
<path d="M1097 89L1116.5 69.5V82.5H1129.5V95.5H1116.5V108.5Z" fill="#d6d9dc" stroke="#c3c6c9" stroke-width="1.5" stroke-linejoin="round"/>
<path d="M1365.5 89L1346 69.5V82.5H1333V95.5H1346V108.5Z" fill="#d6d9dc" stroke="#c3c6c9" stroke-width="1.5" stroke-linejoin="round"/>
<path d="M1428.5 89L1409 69.5V82.5H1396V95.5H1409V108.5Z" fill="#d6d9dc" stroke="#c3c6c9" stroke-width="1.5" stroke-linejoin="round"/>
<rect x="1429.5" y="68.5" width="5" height="41" fill="#d6d9dc" stroke="#c3c6c9" stroke-width="1.5"/>
<rect x="1462" y="77" width="39" height="21" rx="5" fill="#d8dbde" stroke="#c6c9cc" stroke-width="2"/><path d="M1463 82q0-4 4-4h29q4 0 4 4v5h-37z" fill="#dfe2e4"/><rect x="1472" y="69" width="19" height="13" fill="#f0f0f0" stroke="#d0d0d0" stroke-width="2"/><rect x="1470" y="89" width="23" height="6" fill="#c8cacc"/><rect x="1472" y="92" width="19" height="16" fill="#ffffff" stroke="#d0d0d0" stroke-width="2"/><path d="M1475 97h13M1475 101h13M1475 105h13" stroke="#d0d0d0" stroke-width="1.6"/>
<path d="M1526 66H1546L1556 76V108H1526Z" fill="#ffffff"/><path d="M1546 66L1556 76H1546Z" fill="#f4f4f4"/><path d="M1526 66H1546L1556 76V108H1526Z" fill="none" stroke="#d6d6d6" stroke-width="2" stroke-linejoin="miter"/><path d="M1546 66V76H1556" fill="none" stroke="#d6d6d6" stroke-width="2"/>
<rect x="1528" y="80" width="26" height="20" fill="#d8dde2"/>
<path d="M1528 92L1538 85.5L1554 91V100H1528Z" fill="#d7d4c9"/>
<rect x="1549" y="91" width="21" height="21" rx="5" fill="#c3c5c7"/><path d="M1550.5 96.5q0-4 4-4h10q4 0 4 4v5.5h-18z" fill="#cdcfd1"/><g transform="translate(1549 91) scale(0.9545454545454546)"><path d="M11 5.2H5.2V17.2H11" fill="none" stroke="#ffffff" stroke-width="3.4" stroke-linejoin="round"/><path d="M9 11.2H18M14.2 7L18.4 11.2L14.2 15.4" stroke="#ffffff" stroke-width="2.3" fill="none"/></g>
<path d="M1583.5 86h15.5l-7.75 8z" fill="#444"/>
<rect x="1614" y="68" width="39" height="30" rx="8" fill="#b7cde9" stroke="#7b9cc9" stroke-width="2"/><g fill="#4e6f98" transform="translate(1614 68) scale(0.8125 0.8333333333333334)"><path d="M5 8h10l3 3-2 3-4 1-2 4-3-2-2-4z"/><path d="M11 19l4 1 2 4-2 6-2 2-1-5z"/><path d="M20 9h5l2 2h-4l-2 3z"/><path d="M21 14h7l2 4-1 5-3 6-2 1-1-5-2-4z"/><path d="M31 8h12l2 4-3 3-1 4-3-1-2 2-3-3-2-5z"/><path d="M38 25h5l1 3-3 1-3-1z"/></g><path d="M1627.26 70V96M1639.74 70V96M1616 77.0H1651M1616 90.2H1651" stroke="#eaf1fa" stroke-width="1.8"/>
<path d="M1639.78 86.36L1657.40 108.12" stroke="#2d2d2d" stroke-width="9.6" stroke-linecap="round"/><path d="M1644.18 91.80L1657.40 108.12" stroke="#ebd77c" stroke-width="6.4" stroke-linecap="round"/><path d="M1640.41 87.14L1642.42 89.63" stroke="#d9dbd9" stroke-width="6.4"/><circle cx="1657.40" cy="108.12" r="2.1" fill="#ffffff" stroke="#333" stroke-width="1.2"/><path d="M1637.37 72.80A9.0 9.0 0 1 1 1627.01 81.19A7.0 7.0 0 0 0 1637.37 72.80Z" fill="#f0f1f0" stroke="#2d2d2d" stroke-width="1.6" stroke-linejoin="round"/>
<path d="M43.1 172.7L26.3 188.5" stroke="#3a3a3a" stroke-width="8" stroke-linecap="butt"/><path d="M38.6 177.2L27.6 187.4" stroke="#f6c824" stroke-width="3.5"/><circle cx="42.1" cy="173.7" r="2.6" fill="#000"/><circle cx="54" cy="161.8" r="15.5" fill="url(#glass)" stroke="#6b6b6b" stroke-width="2.6"/><path d="M44.9 160.2Q45.8 151.9 54.0 150.2" stroke="#ffffff" stroke-width="2" fill="none" opacity="0.8"/>
<path d="M45.5 162h17M54 153.5v17" stroke="#3e6590" stroke-width="6.2" stroke-linecap="round"/>
<path d="M45.5 162h17M54 153.5v17" stroke="#6a9bd0" stroke-width="3.6" stroke-linecap="round"/>
<path d="M109.1 172.7L92.3 188.5" stroke="#3a3a3a" stroke-width="8" stroke-linecap="butt"/><path d="M104.6 177.2L93.6 187.4" stroke="#f6c824" stroke-width="3.5"/><circle cx="108.1" cy="173.7" r="2.6" fill="#000"/><circle cx="120" cy="161.8" r="15.5" fill="url(#glass)" stroke="#6b6b6b" stroke-width="2.6"/><path d="M110.9 160.2Q111.8 151.9 120.0 150.2" stroke="#ffffff" stroke-width="2" fill="none" opacity="0.8"/>
<path d="M112.5 162h15.5" stroke="#3e6590" stroke-width="6.2" stroke-linecap="round"/>
<path d="M112.5 162h15.5" stroke="#6a9bd0" stroke-width="3.6" stroke-linecap="round"/>
<rect x="161.5" y="147.5" width="18" height="27" fill="#e0e0e0" stroke="#8a8a8a" stroke-width="1.8"/>
<path d="M175.1 172.7L158.3 188.5" stroke="#3a3a3a" stroke-width="8" stroke-linecap="butt"/><path d="M170.6 177.2L159.6 187.4" stroke="#f6c824" stroke-width="3.5"/><circle cx="174.1" cy="173.7" r="2.6" fill="#000"/><circle cx="186" cy="161.8" r="15.5" fill="url(#glass)" stroke="#6b6b6b" stroke-width="2.6"/><path d="M176.9 160.2Q177.8 151.9 186.0 150.2" stroke="#ffffff" stroke-width="2" fill="none" opacity="0.8"/>
<text x="186" y="169" font-family='"Liberation Sans", sans-serif' font-size="21" font-weight="bold" fill="#222" text-anchor="middle" textLength="24" lengthAdjust="spacingAndGlyphs">1:1</text>
<path d="M241.1 172.7L224.3 188.5" stroke="#3a3a3a" stroke-width="8" stroke-linecap="butt"/><path d="M236.6 177.2L225.6 187.4" stroke="#f6c824" stroke-width="3.5"/><circle cx="240.1" cy="173.7" r="2.6" fill="#000"/><circle cx="252" cy="161.8" r="15.5" fill="url(#glass)" stroke="#6b6b6b" stroke-width="2.6"/><path d="M242.9 160.2Q243.8 151.9 252.0 150.2" stroke="#ffffff" stroke-width="2" fill="none" opacity="0.8"/>
<path transform="translate(231 143.5) scale(1 1)" d="M0 0H16L12 4L17 9L9 17L4 12L0 16Z" fill="#6a9bd0" stroke="#3e6590" stroke-width="1.6" stroke-linejoin="miter"/><path transform="translate(270.5 143.5) scale(-1 1)" d="M0 0H16L12 4L17 9L9 17L4 12L0 16Z" fill="#6a9bd0" stroke="#3e6590" stroke-width="1.6" stroke-linejoin="miter"/><path transform="translate(270.5 183) scale(-1 -1)" d="M0 0H16L12 4L17 9L9 17L4 12L0 16Z" fill="#6a9bd0" stroke="#3e6590" stroke-width="1.6" stroke-linejoin="miter"/>
<path d="M293 165.5C292.5 152 302 145 310 145C318 145 324.5 149.5 327.5 152.5L333 146.5V165.5H316L322 159.5C317 155.5 311.5 153.3 307.5 153.5C303 154 301.5 157 301.5 162.5L293 165.5Z" fill="url(#rf1)" stroke="#2f61aa" stroke-width="1.2" stroke-linejoin="miter"/>
<path d="M333 167.5C333.5 181 324 188 316 188C308 188 301.5 183.5 298.5 180.5L293 186.5V167.5H310L304 173.5C309 177.5 314.5 179.7 318.5 179.5C323 179 324.5 176 324.5 170.5L333 167.5Z" fill="url(#rf2)" stroke="#2f61aa" stroke-width="1.2" stroke-linejoin="miter"/>
<path d="M299 162C299 157 301 154.5 305 153.5" stroke="#2d5c9e" stroke-width="2.5" fill="none" opacity="0.5"/>
<rect x="392" y="150" width="24.5" height="22.5" fill="#c8e4f8" stroke="#4e7290" stroke-width="2"/>
<path d="M408 170V163Q408 153 417.5 153Q427 153 427 163V170" fill="none" stroke="#8f8f8b" stroke-width="5"/><path d="M408 170V163Q408 153 417.5 153Q427 153 427 163V170" fill="none" stroke="#f2f2f0" stroke-width="1.6"/><rect x="404" y="170" width="28" height="18" rx="3" fill="#f2da1c" stroke="#c9a300" stroke-width="2"/>
<rect x="458" y="156" width="26" height="22" fill="#c8e4f8" stroke="#4e7290" stroke-width="2"/>
<circle cx="481.5" cy="160" r="11.5" fill="#c8e4f8" stroke="#4e7290" stroke-width="2"/>
<path d="M494 175V168Q494 155 483 155Q476 155 472.5 161" fill="none" stroke="#8f8f8b" stroke-width="5"/>
<path d="M494 175V168Q494 155 483 155Q476 155 472.5 161" fill="none" stroke="#f2f2f0" stroke-width="1.6"/>
<rect x="470" y="170" width="28" height="18" rx="3" fill="#f2da1c" stroke="#c9a300" stroke-width="2"/>
<rect x="528.5" y="164.5" width="24" height="17.5" fill="#c8e4f8" stroke="#4e7290" stroke-width="2"/>
<circle cx="548" cy="161.6" r="11.5" fill="#c8e4f8" stroke="#4e7290" stroke-width="2"/>
<rect x="522.5" y="146.5" width="5" height="5" fill="#000"/><rect x="558.5" y="146.5" width="5" height="5" fill="#000"/><rect x="522.5" y="182.5" width="5" height="5" fill="#000"/><rect x="558.5" y="182.5" width="5" height="5" fill="#000"/>
<rect x="594.5" y="164.5" width="24" height="17.5" fill="#f3f19b" stroke="#999" stroke-width="2"/>
<circle cx="614" cy="161.6" r="11.5" fill="#c8e4f8" stroke="#4e7290" stroke-width="2"/>
<rect x="598.5" y="146.5" width="5" height="5" fill="#000"/><rect x="624.5" y="146.5" width="5" height="5" fill="#000"/><rect x="588.5" y="158.5" width="5" height="5" fill="#000"/><rect x="598.5" y="172.5" width="5" height="5" fill="#000"/><rect x="624.5" y="172.5" width="5" height="5" fill="#000"/><rect x="588.5" y="182.5" width="5" height="5" fill="#000"/><rect x="618.5" y="182.5" width="5" height="5" fill="#000"/>
<rect x="656" y="164" width="30" height="22" fill="#c8e4f8" stroke="#7c9fb6" stroke-width="2"/>
<rect x="664" y="148" width="30" height="22" fill="#f3f09a" stroke="#8f8f8f" stroke-width="2"/>
<path d="M691 186h12l-6.0 6z" fill="#555"/>
<rect x="724" y="148" width="18" height="16" fill="#c8f8c2" stroke="#7bb679" stroke-width="2"/>
<rect x="724" y="168" width="26" height="18" fill="#c8e4f8" stroke="#7c9fb6" stroke-width="2"/>
<rect x="721" y="145" width="2" height="44" fill="#333" />
<path d="M757 186h12l-6.0 6z" fill="#555"/>
<rect x="786" y="158" width="8" height="20" fill="#c8f8c2" stroke="#7bb679" stroke-width="2"/>
<rect x="804" y="158" width="12" height="28" fill="#c8e4f8" stroke="#7c9fb6" stroke-width="2"/>
<rect x="822" y="158" width="8" height="16" fill="#c8f8c2" stroke="#7bb679" stroke-width="2"/>
<rect x="785" y="147" width="2" height="16" fill="#333" />
<rect x="803" y="147" width="2" height="16" fill="#333" />
<rect x="821" y="147" width="2" height="16" fill="#333" />
<path d="M823 186h12l-6.0 6z" fill="#555"/>
<rect x="854" y="148" width="22" height="38" fill="#c8e4f8" stroke="#7c9fb6" stroke-width="2"/>
<rect x="882" y="148" width="10" height="37" fill="#f3f09a" stroke="#8f8f8f" stroke-width="2"/>
<path d="M853 167h10M858 161l5 6l-5 6M877 167h-10M872 161l-5 6l5 6" stroke="#333" stroke-width="2" fill="none"/>
<path d="M889 186h12l-6.0 6z" fill="#555"/>
<defs><filter id="hsh" x="-30%" y="-30%" width="160%" height="160%"><feGaussianBlur stdDeviation="0.9"/></filter></defs>
<path d="M27.8 283.3L26.6 278.6L19.2 267.8L15 256.2Q14.6 252.8 18 252.5Q20.8 252.3 22.2 255.5L24.6 261V242.6Q24.6 239.6 27.5 239.6Q30.5 239.6 30.5 242.6V244Q30.8 242.5 33.9 242.5Q36.9 242.5 36.9 245.5V247.6Q37.5 246 40.4 246Q43.4 246 43.4 249V251Q44 249.2 46.4 249.2Q49 249.2 49 252L49.2 266.5L44.2 283.3Z" fill="#000" opacity="0.45" transform="translate(-1.3 1.6)" stroke="#000" stroke-width="2" filter="url(#hsh)"/>
<path d="M27.8 283.3L26.6 278.6L19.2 267.8L15 256.2Q14.6 252.8 18 252.5Q20.8 252.3 22.2 255.5L24.6 261V242.6Q24.6 239.6 27.5 239.6Q30.5 239.6 30.5 242.6V244Q30.8 242.5 33.9 242.5Q36.9 242.5 36.9 245.5V247.6Q37.5 246 40.4 246Q43.4 246 43.4 249V251Q44 249.2 46.4 249.2Q49 249.2 49 252L49.2 266.5L44.2 283.3Z" fill="#ffffff" stroke="#080808" stroke-width="1.9" stroke-linejoin="round"/>
<path d="M30.5 244V256M36.9 247.6V255.5M43.4 251V257.4" stroke="#080808" stroke-width="1.9" stroke-linecap="round"/>
<rect x="9.8" y="306.5" width="34.5" height="25.5" fill="none" stroke="#111" stroke-width="2.4" stroke-dasharray="3.5 4"/>
<path d="M26.0 331.9L8.5 348.4" stroke="#3a3a3a" stroke-width="8" stroke-linecap="butt"/><path d="M21.5 336.4L9.9 347.2" stroke="#f6c824" stroke-width="3.5"/><circle cx="25.0" cy="332.9" r="2.6" fill="#000"/><circle cx="37.4" cy="320.5" r="16.2" fill="url(#glass)" stroke="#6b6b6b" stroke-width="2.6"/><path d="M27.9 318.8Q28.8 310.2 37.4 308.5" stroke="#ffffff" stroke-width="2" fill="none" opacity="0.8"/>
<path d="M44.3 309v23M25 332.2h19.3" stroke="#c4c4c4" stroke-width="2" stroke-dasharray="3.5 4"/>
<rect x="12.100000000000001" y="372.0" width="5.6" height="5.6" fill="#ececec" stroke="#737373" stroke-width="1.9"/>
<rect x="40.300000000000004" y="372.0" width="5.6" height="5.6" fill="#ececec" stroke="#737373" stroke-width="1.9"/>
<rect x="12.100000000000001" y="400.2" width="5.6" height="5.6" fill="#ececec" stroke="#737373" stroke-width="1.9"/>
<rect x="40.300000000000004" y="400.2" width="5.6" height="5.6" fill="#ececec" stroke="#737373" stroke-width="1.9"/>
<rect x="23.9" y="370.9" width="2" height="2" fill="#666"/>
<rect x="30" y="370.9" width="2" height="2" fill="#666"/>
<rect x="36.1" y="370.9" width="2" height="2" fill="#666"/>
<rect x="11" y="380" width="2" height="2" fill="#666"/>
<rect x="11" y="385.8" width="2" height="2" fill="#666"/>
<rect x="11" y="391.9" width="2" height="2" fill="#666"/>
<rect x="44.9" y="380" width="2" height="2" fill="#666"/>
<rect x="44.9" y="385.8" width="2" height="2" fill="#666"/>
<rect x="44.9" y="391.9" width="2" height="2" fill="#666"/>
<rect x="27.8" y="405.1" width="2" height="2" fill="#666"/>
<path d="M18.1 371.7L22.4 406.5L30.6 400L38.8 413.6L44 410.8L36.6 397.4L46.2 395.8Z" fill="#ffffff" stroke="#000" stroke-width="2.3" stroke-linejoin="miter"/>
<rect x="20.5" y="435.20000000000005" width="30.299999999999997" height="38.999999999999964" fill="url(#scroll)"/>
<path d="M37.2 438.5L46.6 447.8H40.8V454.2H33.6V447.8H27.5Z" fill="#6a9bd0" stroke="#33557a" stroke-width="1.8" stroke-linejoin="miter"/>
<path d="M14 461L24.2 451.5V457.3H30.6V464.5H24.2V470.5Z" fill="#6a9bd0" stroke="#33557a" stroke-width="1.8" stroke-linejoin="miter"/>
<path d="M50 457.3H43.3V464.5H50" fill="#6a9bd0" stroke="#33557a" stroke-width="1.8"/>
<path d="M33.6 474V467.5H40.8V474" fill="#6a9bd0" stroke="#33557a" stroke-width="1.8"/>
<path d="M11.2 437.25A4.65 4.65 0 0 1 20.5 437.25V468.2L20.5 468.2Q15.85 464.7 11.2 468.2Z" fill="#ececec"/><path d="M11.2 468.2Q15.85 464.7 20.5 468.7L24.5 474.2H16.0Q11.2 474.2 11.2 468.2Z" fill="#c9c9c9"/><path d="M20.5 435.20000000000005H50.8V474.2H16.0Q11.2 474.2 11.2 468.2V437.25A4.65 4.65 0 0 1 20.5 437.25V468.7" fill="none" stroke="#979797" stroke-width="2"/><path d="M12.2 468.2Q15.85 464.7 20.5 468.7" fill="none" stroke="#b5b5b5" stroke-width="1"/>
<path d="M24 501L48 512M24 501L14 535" stroke="#111" stroke-width="2.4"/>
<path d="M15 534L30 525" stroke="#111" stroke-width="2.4" stroke-dasharray="2.5 2.5"/>
<path d="M36 523L50.5 537" stroke="#b3730e" stroke-width="6.5"/>
<path d="M29 520L27 517" stroke="#b3730e" stroke-width="3.5"/>
<path d="M29.5 537.5L38.5 527" stroke="#c8a800" stroke-width="6.2" stroke-linecap="round"/>
<path d="M29.5 537.5L38.5 527" stroke="#fbe44c" stroke-width="3.8" stroke-linecap="round"/>
<path d="M26.5 526Q26 523.5 29 521L36 515.5Q39.5 513.5 40.5 515.5Q41 518 38 520.5L31 526Q28 528 26.5 526Z" fill="#dcdcdc" stroke="#777" stroke-width="1"/>
<path d="M42 524L51 515" stroke="#888" stroke-width="3"/>
<path d="M42 524L51 515" stroke="#f4f4f4" stroke-width="1.2"/>
<circle cx="24" cy="501" r="5.3" fill="#2b7ff6"/>
<circle cx="48" cy="512" r="5.3" fill="#2b7ff6"/>
<circle cx="14" cy="535" r="5.3" fill="#2b7ff6"/>
<rect x="20.5" y="563.2" width="30.299999999999997" height="39.19999999999995" fill="url(#scroll)"/>
<path d="M11.2 565.25A4.65 4.65 0 0 1 20.5 565.25V596.4L20.5 596.4Q15.85 592.9 11.2 596.4Z" fill="#ececec"/><path d="M11.2 596.4Q15.85 592.9 20.5 596.9L24.5 602.4H16.0Q11.2 602.4 11.2 596.4Z" fill="#c9c9c9"/><path d="M20.5 563.2H50.8V602.4H16.0Q11.2 602.4 11.2 596.4V565.25A4.65 4.65 0 0 1 20.5 565.25V596.9" fill="none" stroke="#979797" stroke-width="2"/><path d="M12.2 596.4Q15.85 592.9 20.5 596.9" fill="none" stroke="#b5b5b5" stroke-width="1"/>
<rect x="37" y="589" width="18" height="18" rx="4" fill="#4f8c4f"/><rect x="38.2" y="590.2" width="15.6" height="15.6" rx="3" fill="#5c9a5b"/><path d="M38.5 593.5q0-3 3-3h9q3 0 3 3v3.7h-15z" fill="#88b686"/><path d="M46.0 593.0V603.0M41.0 598.0H51.0" stroke="#ffffff" stroke-width="3.9" stroke-linecap="round"/>
<path d="M9 656L18 637L27 632L50 633L50 653L35 661Z" fill="#e6e6e6" stroke="#9a9a9a" stroke-width="2" stroke-linejoin="round"/>
<path d="M16 643Q30 640 48 641M13 650Q28 646 45 650M25 634L18 655M36 633Q30 645 28 659M47 634Q40 645 42 658" stroke="#b4b4b4" stroke-width="1.1" fill="none"/>
<rect x="37" y="653" width="18" height="18" rx="4" fill="#4f8c4f"/><rect x="38.2" y="654.2" width="15.6" height="15.6" rx="3" fill="#5c9a5b"/><path d="M38.5 657.5q0-3 3-3h9q3 0 3 3v3.7h-15z" fill="#88b686"/><path d="M46.0 657.0V667.0M41.0 662.0H51.0" stroke="#ffffff" stroke-width="3.9" stroke-linecap="round"/>
<rect x="12" y="698" width="38" height="26" fill="#8f8f8f"/>
<rect x="14" y="700" width="34" height="22" fill="#52abee"/>
<path d="M14 713L23.5 705.5L48 716V722H14Z" fill="url(#sand)"/>
<rect x="37" y="717" width="18" height="18" rx="4" fill="#4f8c4f"/><rect x="38.2" y="718.2" width="15.6" height="15.6" rx="3" fill="#5c9a5b"/><path d="M38.5 721.5q0-3 3-3h9q3 0 3 3v3.7h-15z" fill="#88b686"/><path d="M46.0 721.0V731.0M41.0 726.0H51.0" stroke="#ffffff" stroke-width="3.9" stroke-linecap="round"/>
<rect x="12" y="762" width="38" height="26" fill="#eeeeee" stroke="#9c9c9c" stroke-width="2"/>
<path d="M23 770V767H39V770M31 767V782M27.5 782H34.5" stroke="#333" stroke-width="2.2" fill="none"/>
<rect x="37" y="781" width="18" height="18" rx="4" fill="#4f8c4f"/><rect x="38.2" y="782.2" width="15.6" height="15.6" rx="3" fill="#5c9a5b"/><path d="M38.5 785.5q0-3 3-3h9q3 0 3 3v3.7h-15z" fill="#88b686"/><path d="M46.0 785.0V795.0M41.0 790.0H51.0" stroke="#ffffff" stroke-width="3.9" stroke-linecap="round"/>
<rect x="13.5" y="821.5" width="9" height="9" fill="#ffd800" stroke="#ff9900" stroke-width="1.6"/>
<rect x="13.5" y="833.5" width="9" height="9" fill="#ff4400" stroke="#b32a00" stroke-width="1.6"/>
<rect x="13.5" y="845.5" width="9" height="9" fill="#00c060" stroke="#1d4d35" stroke-width="1.6"/>
<rect x="25" y="827" width="12" height="3" fill="#9f9f9f" />
<rect x="25" y="839" width="18" height="3" fill="#9f9f9f" />
<rect x="25" y="851" width="8" height="3" fill="#9f9f9f" />
<rect x="37" y="845" width="18" height="18" rx="4" fill="#4f8c4f"/><rect x="38.2" y="846.2" width="15.6" height="15.6" rx="3" fill="#5c9a5b"/><path d="M38.5 849.5q0-3 3-3h9q3 0 3 3v3.7h-15z" fill="#88b686"/><path d="M46.0 849.0V859.0M41.0 854.0H51.0" stroke="#ffffff" stroke-width="3.9" stroke-linecap="round"/>
<rect x="10" y="897.5" width="42" height="7" fill="#9f9f9f" stroke="#333" stroke-width="2"/>
<rect x="19" y="899" width="8" height="4" fill="#ffffff" />
<rect x="35" y="899" width="8" height="4" fill="#ffffff" />
<rect x="37" y="909" width="18" height="18" rx="4" fill="#4f8c4f"/><rect x="38.2" y="910.2" width="15.6" height="15.6" rx="3" fill="#5c9a5b"/><path d="M38.5 913.5q0-3 3-3h9q3 0 3 3v3.7h-15z" fill="#88b686"/><path d="M46.0 913.0V923.0M41.0 918.0H51.0" stroke="#ffffff" stroke-width="3.9" stroke-linecap="round"/>
<path d="M31 946L46 985L31 973L16 988Z" fill="#6c9bcf" stroke="#3e5f85" stroke-width="1.8" stroke-linejoin="round"/>
<text x="31" y="973.5" font-family='"Liberation Sans", sans-serif' font-size="17.5" font-weight="bold" fill="#ffffff" text-anchor="middle">N</text>
<rect x="35" y="971" width="20" height="20" rx="4" fill="#4f8c4f"/><rect x="36.2" y="972.2" width="17.6" height="17.6" rx="3" fill="#5c9a5b"/><path d="M36.5 975.5q0-3 3-3h11q3 0 3 3v4.5h-17z" fill="#88b686"/><path d="M45.0 975.4444444444445V986.5555555555555M39.44444444444444 981.0H50.55555555555556" stroke="#ffffff" stroke-width="4.333333333333333" stroke-linecap="round"/>
<rect x="12" y="1028" width="25" height="20" fill="#c8e4f8" stroke="#8aa9c0" stroke-width="2"/>
<circle cx="38.5" cy="1031.5" r="11" fill="#f9b4b4" stroke="#d9686e" stroke-width="1.8"/>
<path d="M28 1009.5L42 1034.5H15Z" fill="#c8f8c2" stroke="#5f9a5f" stroke-width="1.8" stroke-linejoin="round"/>
<rect x="37" y="1037" width="18" height="18" rx="4" fill="#4f8c4f"/><rect x="38.2" y="1038.2" width="15.6" height="15.6" rx="3" fill="#5c9a5b"/><path d="M38.5 1041.5q0-3 3-3h9q3 0 3 3v3.7h-15z" fill="#88b686"/><path d="M46.0 1041.0V1051.0M41.0 1046.0H51.0" stroke="#ffffff" stroke-width="3.9" stroke-linecap="round"/>
<path d="M48 1050h10.5l-5.25 5.5z" fill="#1e2e1e"/>
<path d="M31.0 1076.5L36.6 1089.8L51.0 1091.0L40.0 1100.4L43.3 1114.5L31.0 1107.0L18.7 1114.5L22.0 1100.4L11.0 1091.0L25.4 1089.8Z" fill="#fbeab0" stroke="#e39b55" stroke-width="2" stroke-linejoin="round"/>
<rect x="37" y="1101" width="18" height="18" rx="4" fill="#4f8c4f"/><rect x="38.2" y="1102.2" width="15.6" height="15.6" rx="3" fill="#5c9a5b"/><path d="M38.5 1105.5q0-3 3-3h9q3 0 3 3v3.7h-15z" fill="#88b686"/><path d="M46.0 1105.0V1115.0M41.0 1110.0H51.0" stroke="#ffffff" stroke-width="3.9" stroke-linecap="round"/>
<path d="M14 1176L46 1144" stroke="#333" stroke-width="2.2"/>
<rect x="11" y="1173" width="6" height="6" fill="#333" />
<path d="M50.5 1140L46 1153L38 1145Z" fill="#e8e8e8" stroke="#333" stroke-width="2" stroke-linejoin="round"/>
<rect x="37" y="1165" width="18" height="18" rx="4" fill="#4f8c4f"/><rect x="38.2" y="1166.2" width="15.6" height="15.6" rx="3" fill="#5c9a5b"/><path d="M38.5 1169.5q0-3 3-3h9q3 0 3 3v3.7h-15z" fill="#88b686"/><path d="M46.0 1169.0V1179.0M41.0 1174.0H51.0" stroke="#ffffff" stroke-width="3.9" stroke-linecap="round"/>
<path d="M24 1205L48 1217M24 1205L14 1239" stroke="#111" stroke-width="2.4"/>
<path d="M14 1239L48 1217" stroke="#111" stroke-width="2.4" stroke-dasharray="2.5 2.5"/>
<circle cx="24" cy="1205" r="5" fill="#2b7ff6"/>
<circle cx="48" cy="1217" r="5" fill="#2b7ff6"/>
<circle cx="14" cy="1239" r="5" fill="#2b7ff6"/>
<rect x="37" y="1229" width="18" height="18" rx="4" fill="#4f8c4f"/><rect x="38.2" y="1230.2" width="15.6" height="15.6" rx="3" fill="#5c9a5b"/><path d="M38.5 1233.5q0-3 3-3h9q3 0 3 3v3.7h-15z" fill="#88b686"/><path d="M46.0 1233.0V1243.0M41.0 1238.0H51.0" stroke="#ffffff" stroke-width="3.9" stroke-linecap="round"/>
<path d="M48 1242h10.5l-5.25 5.5z" fill="#1e2e1e"/>
<path d="M25.5 1314l5.5 4.5l5.5-4.5M25.5 1322.5l5.5 4.5l5.5-4.5" stroke="#3a3a3a" stroke-width="2.2" fill="none"/>
</svg>
</body></html>
